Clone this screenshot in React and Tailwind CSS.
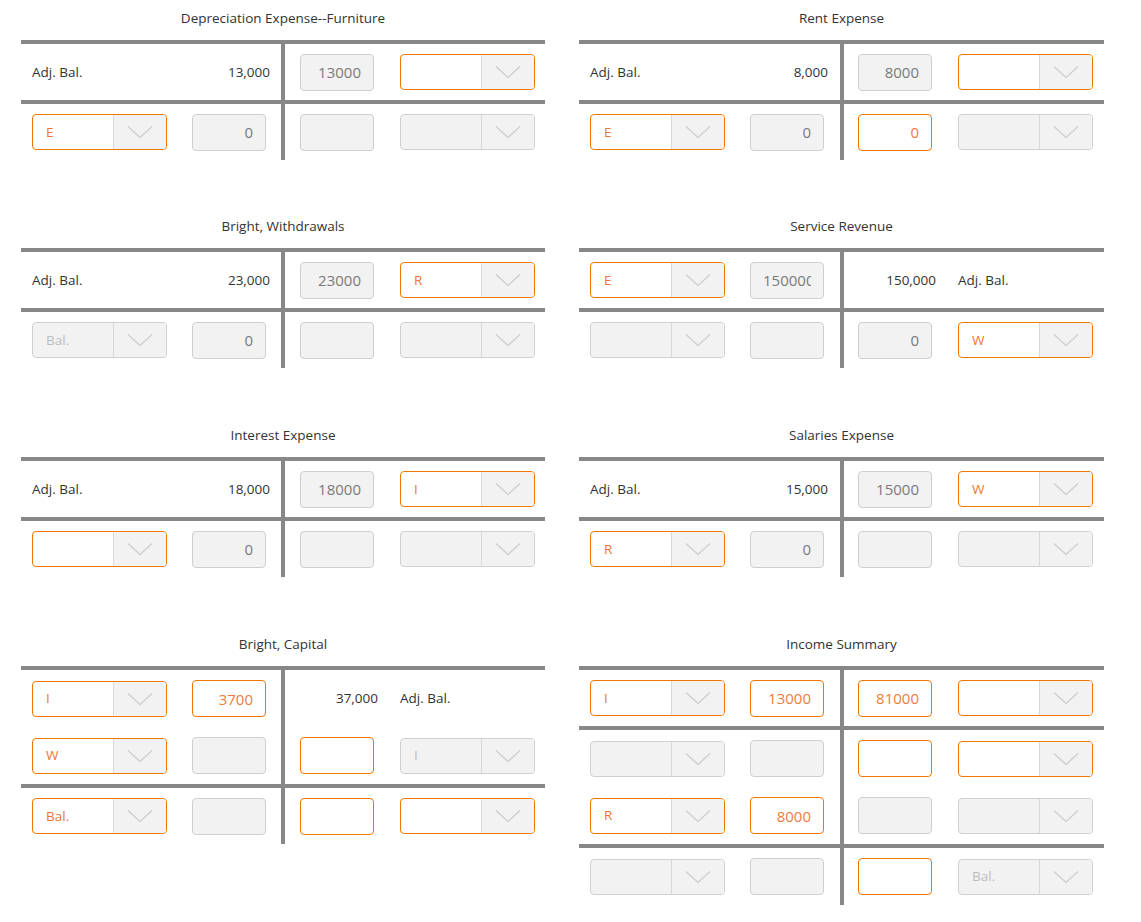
import React from "react";

const ORANGE_BORDER = "border-[#f07800]";

function Chevron() {
  return (
    <svg width="26" height="14" viewBox="0 0 26 14">
      <polyline points="1,1.5 13,12.5 25,1.5" fill="none" stroke="#d0d0d0" strokeWidth="1.5" />
    </svg>
  );
}

function Sel({ value, active }) {
  return (
    <div
      className={`flex h-[36px] w-[135px] shrink-0 overflow-hidden rounded-[4px] border ${
        active ? `${ORANGE_BORDER} bg-white` : "border-[#d0d0d0] bg-[#f2f2f2]"
      }`}
    >
      <div
        className={`flex flex-1 items-center pl-[13px] text-[13.5px] ${
          active ? "text-[#ee7630]" : "text-[#bdbdbd]"
        }`}
      >
        {value}
      </div>
      <div className="flex w-[53px] items-center justify-center border-l border-[#d8d8d8] bg-[#f2f2f2]">
        <Chevron />
      </div>
    </div>
  );
}

function Inp({ value, active }) {
  return (
    <input
      readOnly
      value={value}
      className={`h-[37px] w-[74px] shrink-0 rounded-[4px] border px-[12px] text-right text-[15px] outline-none ${
        active
          ? `${ORANGE_BORDER} bg-white text-[#f07c3a]`
          : "border-[#cfcfcf] bg-[#f2f2f2] text-[#7a7a7a]"
      }`}
      style={{ fontFamily: '"Open Sans", sans-serif' }}
    />
  );
}

function Line({ side, line, h, rightPanel }) {
  const hc = h === 57 ? "h-[57px]" : "h-[56px]";
  const rpl = rightPanel ? "pl-[14px]" : "pl-[15px]";
  if (line.label) {
    if (side === "L") {
      return (
        <div className={`flex ${hc} items-center pl-[11px]`}>
          <div className="w-[135px] text-[13.5px] text-[#333]">{line.label}</div>
          <div className="ml-[25px] w-[78px] text-right text-[13.5px] text-[#333]">{line.amount}</div>
        </div>
      );
    }
    return (
      <div className={`flex ${hc} items-center ${rpl}`}>
        <div className="w-[78px] text-right text-[13.5px] text-[#333]">{line.amount}</div>
        <div className="ml-[22px] w-[135px] text-[13.5px] text-[#333]">{line.label}</div>
      </div>
    );
  }
  const s = line.sel;
  const i = line.inp;
  if (side === "L") {
    return (
      <div className={`flex ${hc} items-center pl-[11px]`}>
        <Sel value={s[0]} active={s[1]} />
        <div className="ml-[25px]">
          <Inp value={i[0]} active={i[1]} />
        </div>
      </div>
    );
  }
  return (
    <div className={`flex ${hc} items-center ${rpl}`}>
      <Inp value={i[0]} active={i[1]} />
      <div className="ml-[26px]">
        <Sel value={s[0]} active={s[1]} />
      </div>
    </div>
  );
}

function Account({ title, sections, right, mb }) {
  const leftW = right ? "w-[261px]" : "w-[260px]";
  const panelW = right ? "w-[525px]" : "w-[524px]";
  return (
    <div className={`${panelW} ${mb}`}>
      <div className="h-[40px] pt-[8px] text-center text-[13.5px] leading-[20px] text-[#333]">{title}</div>
      <div className="h-[4px] bg-[#878787]" />
      {sections.map((sec, idx) => {
        const h = sec.L.length > 1 || sec.tall ? 57 : 56;
        return (
          <React.Fragment key={idx}>
            {idx > 0 && <div className="h-[4px] bg-[#878787]" />}
            <div className="flex">
              <div className={leftW}>
                {sec.L.map((ln, j) => (
                  <Line key={j} side="L" line={ln} h={h} rightPanel={right} />
                ))}
              </div>
              <div className="w-[4px] bg-[#878787]" />
              <div className="w-[260px]">
                {sec.R.map((ln, j) => (
                  <Line key={j} side="R" line={ln} h={h} rightPanel={right} />
                ))}
              </div>
            </div>
          </React.Fragment>
        );
      })}
    </div>
  );
}

const A = true;
const D = false;
const f = (selV, selA, inpV, inpA) => ({ sel: [selV, selA], inp: [inpV, inpA] });
const lab = (amount) => ({ label: "Adj. Bal.", amount });

const accounts = [
  {
    title: "Depreciation Expense--Furniture",
    sections: [
      { L: [lab("13,000")], R: [f("", A, "13000", D)] },
      { L: [f("E", A, "0", D)], R: [f("", D, "", D)] },
    ],
  },
  {
    title: "Rent Expense",
    sections: [
      { L: [lab("8,000")], R: [f("", A, "8000", D)] },
      { L: [f("E", A, "0", D)], R: [f("", D, "0", A)] },
    ],
  },
  {
    title: "Bright, Withdrawals",
    sections: [
      { L: [lab("23,000")], R: [f("R", A, "23000", D)] },
      { L: [f("Bal.", D, "0", D)], R: [f("", D, "", D)] },
    ],
  },
  {
    title: "Service Revenue",
    sections: [
      { L: [f("E", A, "150000", D)], R: [lab("150,000")] },
      { L: [f("", D, "", D)], R: [f("W", A, "0", D)] },
    ],
  },
  {
    title: "Interest Expense",
    sections: [
      { L: [lab("18,000")], R: [f("I", A, "18000", D)] },
      { L: [f("", A, "0", D)], R: [f("", D, "", D)] },
    ],
  },
  {
    title: "Salaries Expense",
    sections: [
      { L: [lab("15,000")], R: [f("W", A, "15000", D)] },
      { L: [f("R", A, "0", D)], R: [f("", D, "", D)] },
    ],
  },
  {
    title: "Bright, Capital",
    sections: [
      {
        L: [f("I", A, "3700", A), f("W", A, "", D)],
        R: [lab("37,000"), f("I", D, "", A)],
      },
      { L: [f("Bal.", A, "", D)], R: [f("", A, "", A)] },
    ],
  },
  {
    title: "Income Summary",
    sections: [
      { L: [f("I", A, "13000", A)], R: [f("", A, "81000", A)] },
      {
        L: [f("", D, "", D), f("R", A, "8000", A)],
        R: [f("", A, "", A), f("", D, "", D)],
      },
      { L: [f("", D, "", D)], R: [f("Bal.", D, "", A)], tall: true },
    ],
  },
];

export default function App() {
  const mbs = ["mb-[48px]", "mb-[49px]", "mb-[49px]", "mb-0"];
  return (
    <div
      className="min-h-[922px] w-[1141px] bg-white pl-[21px]"
      style={{ fontFamily: '"Open Sans", sans-serif' }}
    >
      <div className="grid grid-cols-[524px_525px] gap-x-[34px]">
        {accounts.map((acc, idx) => (
          <Account
            key={idx}
            title={acc.title}
            sections={acc.sections}
            right={idx % 2 === 1}
            mb={mbs[Math.floor(idx / 2)]}
          />
        ))}
      </div>
    </div>
  );
}
